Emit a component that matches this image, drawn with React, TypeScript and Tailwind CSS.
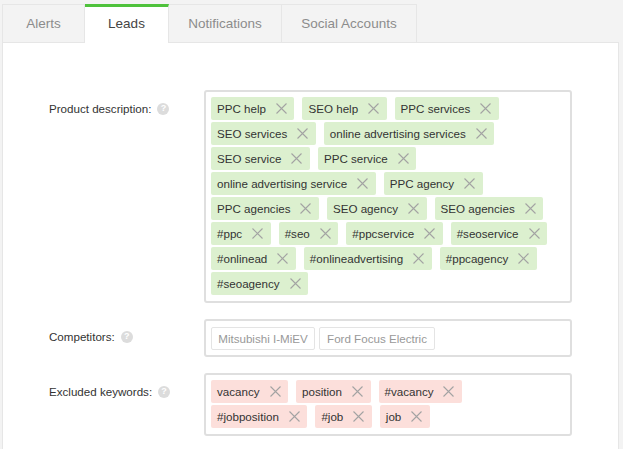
const productTags = [
  "PPC help",
  "SEO help",
  "PPC services",
  "SEO services",
  "online advertising services",
  "SEO service",
  "PPC service",
  "online advertising service",
  "PPC agency",
  "PPC agencies",
  "SEO agency",
  "SEO agencies",
  "#ppc",
  "#seo",
  "#ppcservice",
  "#seoservice",
  "#onlinead",
  "#onlineadvertising",
  "#ppcagency",
  "#seoagency",
];

const excludedTags = ["vacancy", "position", "#vacancy", "#jobposition", "#job", "job"];

function Tag({ label, color }: { label: string; color: "green" | "red" }) {
  return (
    <span
      className={
        color === "green"
          ? "flex h-[23px] items-center rounded-[2px] bg-[#dcf0cf] pl-[6px] pr-[7.5px] text-[#333]"
          : "flex h-[23px] items-center rounded-[2px] bg-[#fcdfdb] pl-[6px] pr-[7.5px] text-[#333]"
      }
    >
      {label}
      <svg width="11" height="11" viewBox="0 0 11 11" className="ml-[10px] text-[#a3a3a3]">
        <path d="M0.5 0.5L10.5 10.5M10.5 0.5L0.5 10.5" stroke="currentColor" strokeWidth="1.1" fill="none" />
      </svg>
    </span>
  );
}

function Label({ text }: { text: string }) {
  return (
    <div className="flex h-[23px] items-center text-[#333]">
      {text}
      <span className="ml-[6px] flex h-[12px] w-[12px] items-center justify-center rounded-full bg-[#dcdcdc] text-[9px] font-bold leading-none text-white">
        ?
      </span>
    </div>
  );
}

export default function App() {
  return (
    <div className="h-[449px] w-[623px] overflow-hidden bg-[#f3f3f3] pl-[2px] pt-[4px] font-['Liberation_Sans',Arial,sans-serif] text-[11.6px]">
      {/* tabs */}
      <div className="flex h-[38px] text-[13.5px]">
        <div className="flex w-[83px] items-center justify-center border-x border-t border-[#e6e6e6] pt-[1px] text-[#8c8c8c]">
          Alerts
        </div>
        <div className="relative z-10 -mb-px flex w-[84px] items-center justify-center border-t-[3px] border-r border-[#e6e6e6] border-t-[#4fc23c] bg-white pb-[2px] text-[#444]">
          Leads
        </div>
        <div className="flex w-[113px] items-center justify-center border-r border-t border-[#e6e6e6] pt-[1px] text-[#8c8c8c]">
          Notifications
        </div>
        <div className="flex w-[135px] items-center justify-center border-r border-t border-[#e6e6e6] pt-[1px] text-[#8c8c8c]">
          Social Accounts
        </div>
      </div>

      {/* form */}
      <div className="flex h-[420px] w-[617px] flex-col gap-[16px] border border-[#e6e6e6] bg-white pl-[46px] pt-[47px]">
        <div className="flex">
          <div className="w-[155px] pt-[7px]">
            <Label text="Product description:" />
          </div>
          <div className="flex h-[213px] w-[368px] flex-wrap content-start gap-x-[8px] gap-y-[2px] rounded-[3px] border-2 border-[#dfdfdf] py-[5px] pl-[5px] pr-[10px]">
            {productTags.map((t) => (
              <Tag key={t} label={t} color="green" />
            ))}
          </div>
        </div>

        <div className="flex">
          <div className="w-[155px] pt-[6px]">
            <Label text="Competitors:" />
          </div>
          <div className="flex h-[38px] w-[368px] gap-[4px] rounded-[3px] border-2 border-[#dfdfdf] px-[5px] pt-[6px]">
            <span className="flex h-[23px] w-[104px] items-center justify-center rounded-[2px] border border-[#e4e4e4] text-[#999]">
              Mitsubishi I-MiEV
            </span>
            <span className="flex h-[23px] w-[116px] items-center justify-center rounded-[2px] border border-[#e4e4e4] text-[#999]">
              Ford Focus Electric
            </span>
          </div>
        </div>

        <div className="flex">
          <div className="w-[155px] pt-[7px]">
            <Label text="Excluded keywords:" />
          </div>
          <div className="flex h-[63px] w-[368px] flex-wrap content-start gap-x-[8px] gap-y-[2px] rounded-[3px] border-2 border-[#dfdfdf] py-[5px] pl-[5px] pr-[10px]">
            {excludedTags.map((t) => (
              <Tag key={t} label={t} color="red" />
            ))}
          </div>
        </div>
      </div>
    </div>
  );
}
